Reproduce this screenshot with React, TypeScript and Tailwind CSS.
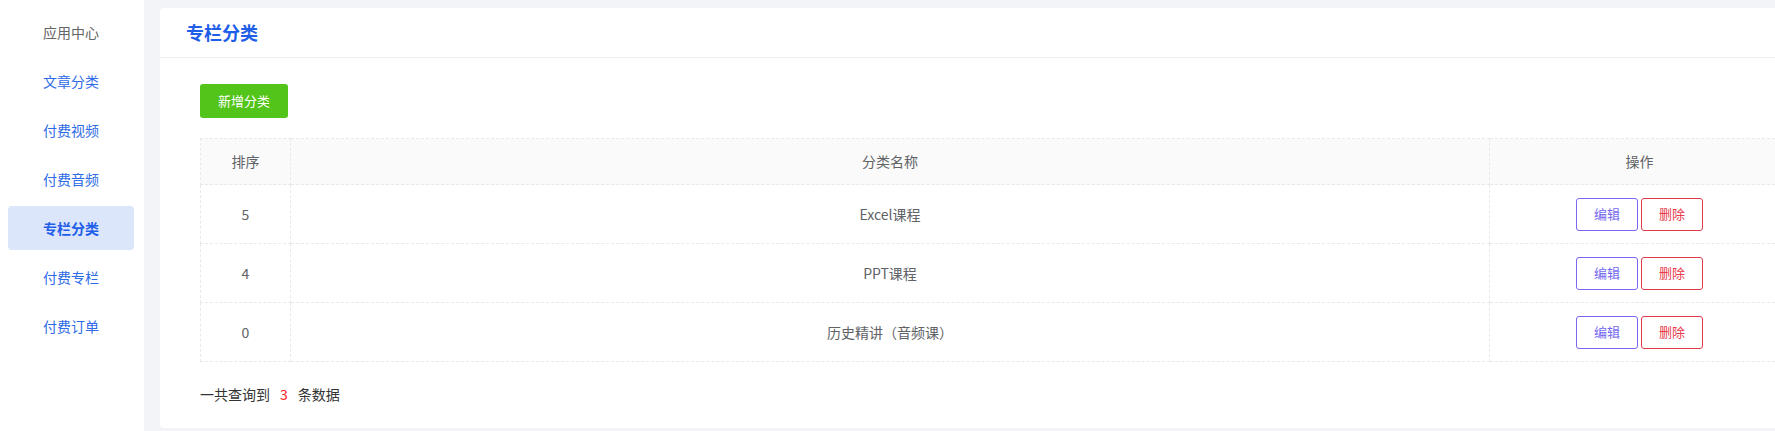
import React from 'react';

export default function App() {
  const menu = ['应用中心', '文章分类', '付费视频', '付费音频', '专栏分类', '付费专栏', '付费订单'];
  const rows = [
    { sort: 5, name: 'Excel课程' },
    { sort: 4, name: 'PPT课程' },
    { sort: 0, name: '历史精讲（音频课）' },
  ];

  return (
    <div
      className="flex w-[1775px] h-[431px] overflow-hidden bg-[#f3f4f8]"
      style={{ fontFamily: '"Noto Sans CJK SC", "Noto Sans", sans-serif' }}
    >
      <div className="w-[144px] shrink-0 bg-white pt-[10px] flex flex-col gap-[5px]">
        {menu.map((m, i) => (
          <div
            key={m}
            className={
              'ml-2 w-[126px] h-[44px] rounded-[4px] flex items-center justify-center text-[14px] ' +
              (i === 0
                ? 'text-[#666]'
                : i === 4
                ? 'bg-[#dbe6fa] text-[#1f5ee8] font-bold'
                : 'text-[#2e6be6]')
            }
          >
            {m}
          </div>
        ))}
      </div>

      <div className="pl-4 pt-2 shrink-0">
        <div className="w-[1669px] h-[420px] bg-white rounded-[4px]">
          <div className="h-[50px] px-[26px] flex items-center border-b border-[#f0f1f4]">
            <h1 className="text-[18px] font-bold text-[#1f5ee8]">专栏分类</h1>
          </div>
          <div className="px-[40px] pt-[26px]">
            <button className="w-[88px] h-[34px] rounded-[3px] bg-[#52c41a] text-white text-[13px]">
              新增分类
            </button>
            <table className="mt-[20px] w-[1589px] border-collapse text-[14px] text-[#606266] table-fixed">
              <colgroup>
                <col className="w-[90px]" />
                <col className="w-[1199px]" />
                <col className="w-[300px]" />
              </colgroup>
              <thead>
                <tr className="h-[46px] bg-[#fafafa]">
                  <th className="font-normal border border-dashed border-[#e8e9ee]">排序</th>
                  <th className="font-normal border border-dashed border-[#e8e9ee]">分类名称</th>
                  <th className="font-normal border border-dashed border-[#e8e9ee]">操作</th>
                </tr>
              </thead>
              <tbody>
                {rows.map((r) => (
                  <tr key={r.name} className="h-[59px]">
                    <td className="text-center border border-dashed border-[#e8e9ee]">{r.sort}</td>
                    <td className="text-center border border-dashed border-[#e8e9ee]">{r.name}</td>
                    <td className="border border-dashed border-[#e8e9ee]">
                      <div className="flex justify-center gap-[3px]">
                        <button className="w-[62px] h-[33px] rounded-[3px] border border-[#7b66f2] text-[#7367f0] text-[13px] bg-white">
                          编辑
                        </button>
                        <button className="w-[62px] h-[33px] rounded-[3px] border border-[#e0394a] text-[#e8384a] text-[13px] bg-white">
                          删除
                        </button>
                      </div>
                    </td>
                  </tr>
                ))}
              </tbody>
            </table>
            <div className="mt-[22px] text-[14px] text-[#333] flex items-center">
              <span>一共查询到</span>
              <span className="mx-[10px] text-[#ff1a1a]">3</span>
              <span>条数据</span>
            </div>
          </div>
        </div>
      </div>
    </div>
  );
}
